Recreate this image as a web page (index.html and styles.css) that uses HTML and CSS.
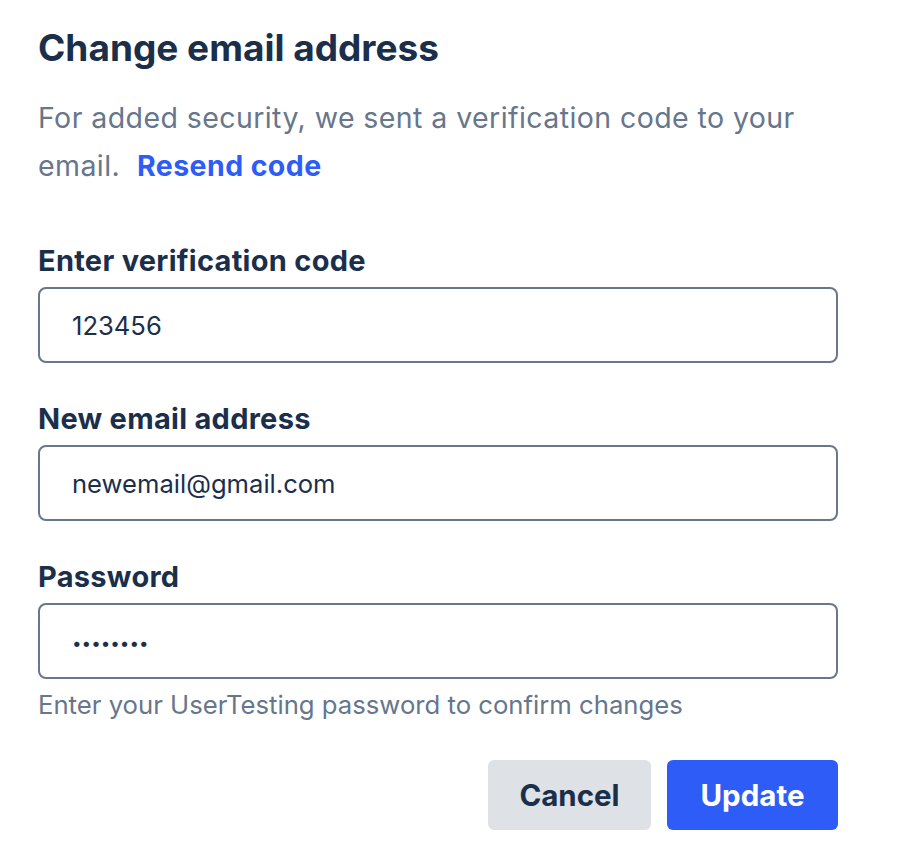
FILE: index.html
```html
<!DOCTYPE html>
<html>
<head>
<meta charset="utf-8">
<link rel="stylesheet" href="styles.css">
</head>
<body>
<div class="dialog">
  <h1 class="title">Change email address</h1>
  <p class="intro">For added security, we sent a verification code to your<br>email.&nbsp; <a class="link" href="#">Resend code</a></p>
  <form class="form">
    <div class="field">
      <label class="label">Enter verification code</label>
      <div class="input">123456</div>
    </div>
    <div class="field">
      <label class="label">New email address</label>
      <div class="input">newemail@gmail.com</div>
    </div>
    <div class="field">
      <label class="label">Password</label>
      <div class="input input-pw">••••••••</div>
      <div class="help">Enter your UserTesting password to confirm changes</div>
    </div>
    <div class="actions">
      <button type="button" class="btn btn-cancel">Cancel</button>
      <button type="button" class="btn btn-primary">Update</button>
    </div>
  </form>
</div>
</body>
</html>
```
FILE: styles.css
```css
* { box-sizing: border-box; }
html, body { margin: 0; padding: 0; background: #fff; }
body { font-family: "Inter", "Lato", sans-serif; color: #1b2f4b; }
.dialog { width: 838px; padding: 24px 0 0 38px; }
.title { margin: 0; font-size: 37px; font-weight: 700; line-height: 48px; color: #1b2f4b; }
.intro { margin: 22px 0 0; font-size: 28.5px; line-height: 48px; color: #66768b; width: 820px; letter-spacing: 0.42px; }
.link { color: #2d5df6; font-weight: 700; text-decoration: none; }
.form { margin-top: 53px; display: flex; flex-direction: column; }
.field { display: flex; flex-direction: column; }
.field + .field { margin-top: 38px; }
.label { font-size: 29px; font-weight: 700; line-height: 36px; color: #1b2f4b; margin-bottom: 8px; letter-spacing: 0.28px; }
.input { height: 76px; border: 2px solid #68778b; border-radius: 8px; padding: 0 32px; display: flex; align-items: center; font-size: 25.6px; color: #1b2f4b; }
.input-pw { font-size: 17px; letter-spacing: 0; padding-top: 4px; }
.help { margin-top: 10px; font-size: 25.7px; line-height: 32px; color: #66768b; }
.actions { display: flex; justify-content: flex-end; gap: 16px; margin-top: 39px; }
.btn { height: 70px; border: none; border-radius: 6px; font-family: inherit; font-size: 29.5px; font-weight: 700; padding: 0; }
.btn-cancel { background: #dee1e6; color: #1b2f4b; width: 163px; }
.btn-primary { background: #2d5df6; color: #fff; width: 171px; }
```
